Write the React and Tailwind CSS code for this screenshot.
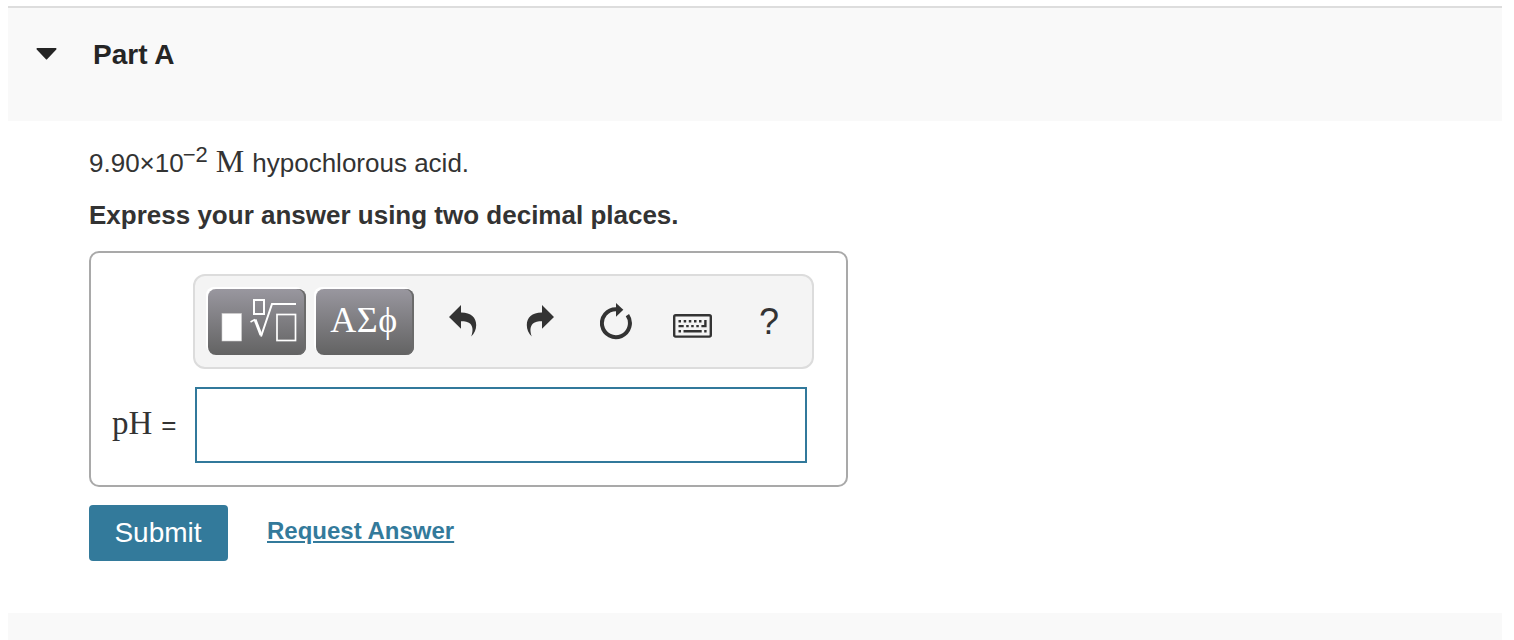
import React from 'react';

const TOOL_BUTTON =
  'flex h-[66px] w-[98px] items-center justify-center rounded-lg bg-linear-to-b from-[#99979f] to-[#636363] text-white shadow-[-2px_-2px_0_#ffffff,inset_-2px_0_0_#6b6b6b]';

function TemplatesIcon() {
  return (
    <svg width="98" height="66" viewBox="0 0 98 66" fill="none" stroke="#fff">
      <rect x="14" y="24.5" width="19.5" height="27.5" fill="#fff" stroke="#d0d0d0" strokeWidth="0.6" />
      <rect x="46" y="11" width="10" height="14" strokeWidth="2" />
      <path d="M42.5 33L47 30.5" strokeWidth="1.5" />
      <path d="M47 30.5L53 46" strokeWidth="3" />
      <path d="M53 47.5L64 15H88" strokeWidth="2" />
      <rect x="69" y="25.5" width="18.5" height="26" strokeWidth="1.7" />
    </svg>
  );
}

function UndoIcon() {
  return (
    <svg width="28" height="32" viewBox="0 0 28 32" fill="#333">
      <path d="M0 12L12 0V7.5C22 7.4 27.2 12.6 27.2 20C27.2 24.5 25.5 28.5 22.2 31.5C24 26.5 24.3 21.8 21 18.5C19 16.7 16 16.2 12 16.2V23.7Z" />
    </svg>
  );
}

function RedoIcon() {
  return (
    <svg width="28" height="32" viewBox="0 0 28 32" fill="#333">
      <path d="M28 12L16 0V7.5C6 7.4 .8 12.6 .8 20C.8 24.5 2.5 28.5 5.8 31.5C4 26.5 3.7 21.8 7 18.5C9 16.7 12 16.2 16 16.2V23.7Z" />
    </svg>
  );
}

function ResetIcon() {
  return (
    <svg width="34" height="38" viewBox="0 0 34 38">
      <path d="M16 6.2A14 14 0 1 0 27.4 12.2" fill="none" stroke="#333" strokeWidth="4" />
      <path d="M16 0L23.3 6.8L16 13.8Z" fill="#333" />
    </svg>
  );
}

function KeyboardIcon() {
  return (
    <svg width="40" height="24" viewBox="0 0 40 24" fill="#333">
      <rect x="1.2" y="1.2" width="36.6" height="21.4" rx="1.5" fill="none" stroke="#333" strokeWidth="2.4" />
      <path d="M5.5 6h2.5v2.5h-2.5zM10.7 6h2.5v2.5h-2.5zM15.8 6h2.5v2.5h-2.5zM21 6h2.5v2.5h-2.5zM26 6h2.5v2.5H26z" />
      <path d="M5.5 11h5.2v2.3H5.5zM13.2 11h2.5v2.3h-2.5zM18.2 11h2.5v2.3h-2.5zM23.3 11h2.5v2.3h-2.5z" />
      <path d="M31.2 6h2.4v7.3h-5.2V11h2.8z" />
      <path d="M5.5 16h2.5v2.4H5.5zM10.5 16h18.2v2.4H10.5zM31.2 16h2.4v2.4h-2.4z" />
    </svg>
  );
}

function Toolbar() {
  return (
    <div className="ml-[102px] flex h-[95px] w-[621px] rounded-xl border-2 border-[#dcdcdc] bg-[#f4f4f4] pt-[13px] pl-[13px]">
      <button className={TOOL_BUTTON} aria-label="Templates">
        <TemplatesIcon />
      </button>
      <button className={`${TOOL_BUTTON} ml-2.5`} aria-label="Symbols">
        <span className="pr-0.5 pb-1 font-['Liberation_Serif',serif] text-[36px] leading-none tracking-[0.5px]">ΑΣϕ</span>
      </button>
      <button className="ml-[35px] h-8 pt-4" aria-label="Undo">
        <UndoIcon />
      </button>
      <button className="ml-[49px] h-8 pt-4" aria-label="Redo">
        <RedoIcon />
      </button>
      <button className="ml-[46px] h-9 pt-3.5" aria-label="Reset">
        <ResetIcon />
      </button>
      <button className="ml-[39px] h-8 pt-[25px]" aria-label="Keyboard shortcuts">
        <KeyboardIcon />
      </button>
      <button className="ml-[46px] h-[66px] text-[36px] leading-[66px] text-[#333]">
        ?
      </button>
    </div>
  );
}

export default function App() {
  return (
    <div className="h-[640px] overflow-hidden bg-white px-2 pt-1.5 font-['Liberation_Sans',sans-serif] text-[#333]">
      <header className="mr-1 flex h-[115px] border-t-2 border-[#dddddd] bg-[#f9f9f9] pt-[29px] pl-7">
        <svg className="mt-[11px]" width="21" height="12" viewBox="0 0 21 12" fill="#252525">
          <path d="M1 0H20Q21 .6 20.3 1.4L11.3 11Q10.5 12 9.7 11L.7 1.4Q0 .6 1 0Z" />
        </svg>
        <h2 className="ml-9 text-[28px] leading-9 font-bold text-[#252525]">Part A</h2>
      </header>

      <main className="h-[492px] pl-[81px]">
        <p className="flex h-[68px] items-baseline pt-[22px] text-[26px] leading-10 whitespace-pre">
          <span>9.90×10</span>
          <span className="relative -top-2.5 -left-px text-[22px] leading-none">−2</span>
          <span className="ml-[7px] font-['Liberation_Serif',serif] text-[32px] leading-none">M</span>
          <span className="ml-2">hypochlorous acid.</span>
        </p>
        <p className="h-[62px] pt-1.5 text-[26px] leading-10 font-bold">
          Express your answer using two decimal places.
        </p>

        <section className="h-[236px] w-[759px] rounded-[10px] border-2 border-[#a9a9a9] pt-[21px]">
          <Toolbar />
          <div className="mt-[18px] flex">
            <label htmlFor="ph" className="flex h-[76px] w-[104px] items-baseline pt-4 pl-[21px] whitespace-pre">
              <span className="font-['Liberation_Serif',serif] text-[33px] leading-10">pH</span>
              <span className="ml-[9px] text-[26px]">=</span>
            </label>
            <input id="ph" className="h-[76px] w-[612px] border-2 border-[#31799b] bg-white px-3 text-[26px] outline-none" />
          </div>
        </section>

        <div className="mt-[18px] flex">
          <button className="h-14 w-[139px] rounded-[4px] bg-[#337a9b] pr-px text-[28px] text-white">Submit</button>
          <a href="#" className="ml-[39px] pt-2 text-[24px] leading-9 font-bold text-[#337a9b] underline decoration-2 underline-offset-2">
            Request Answer
          </a>
        </div>
      </main>

      <footer className="mr-1 h-[27px] bg-[#f9f9f9]" />
    </div>
  );
}
